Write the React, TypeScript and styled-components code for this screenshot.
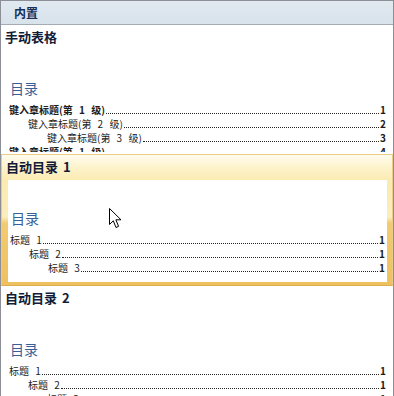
import React from 'react';
import styled, {createGlobalStyle} from "styled-components";

const GlobalStyle = createGlobalStyle`
    html, body {
        margin: 0;
        padding: 0;
        background: #ffffff;
    }
    body {
        font-family: "Noto Sans CJK SC", "Noto Sans", sans-serif;
    }
`

type Entry = { text: string; page: string; level: number; bold?: boolean };

const manualEntries: Entry[] = [
    {text: '键入章标题(第 1 级)', page: '1', level: 1, bold: true},
    {text: '键入章标题(第 2 级)', page: '2', level: 2},
    {text: '键入章标题(第 3 级)', page: '3', level: 3},
    {text: '键入章标题(第 1 级)', page: '4', level: 1, bold: true},
];

const autoEntries: Entry[] = [
    {text: '标题 1', page: '1', level: 1},
    {text: '标题 2', page: '1', level: 2},
    {text: '标题 3', page: '1', level: 3},
];

const Toc = ({entries}: { entries: Entry[] }) => (
    <Preview>
        <TocHeading>目录</TocHeading>
        <Entries>
            {entries.map((e, i) => (
                <EntryRow key={i} $level={e.level} $bold={e.bold}>
                    <EntryText>{e.text}</EntryText>
                    <Leader/>
                    <PageNum>{e.page}</PageNum>
                </EntryRow>
            ))}
        </Entries>
    </Preview>
);

const Cursor = () => (
    <CursorWrap>
        <svg width="13" height="21" viewBox="0 0 13 21">
            <path d="M0.5 0.5 L0.5 16.5 L4.3 12.8 L7 19.5 L9.6 18.4 L6.9 11.8 L12 11.8 Z"
                  fill="#ffffff" stroke="#000000" strokeWidth="1" strokeLinejoin="miter"/>
        </svg>
    </CursorWrap>
);

export default function App() {
    return (
        <>
            <GlobalStyle/>
            <Panel>
                <Header>内置</Header>
                <List>
                    <Item>
                        <ItemTitle>手动表格</ItemTitle>
                        <Toc entries={manualEntries}/>
                    </Item>
                    <Item $selected>
                        <ItemTitle>自动目录 1</ItemTitle>
                        <Toc entries={autoEntries}/>
                        <Cursor/>
                    </Item>
                    <Item>
                        <ItemTitle>自动目录 2</ItemTitle>
                        <Toc entries={autoEntries}/>
                    </Item>
                </List>
            </Panel>
        </>
    );
}

const Panel = styled.div`
    width: 394px;
    height: 396px;
    box-sizing: border-box;
    border: 1px solid #8c9096;
    border-bottom: none;
    display: flex;
    flex-direction: column;
    overflow: hidden;
    background: #ffffff;
`

const Header = styled.div`
    height: 24px;
    flex-shrink: 0;
    box-sizing: border-box;
    padding-left: 13px;
    line-height: 23px;
    font-size: 12px;
    font-weight: 700;
    color: #16305a;
    background: linear-gradient(to bottom, #e1e9f0, #d8e2eb);
    border-bottom: 1px solid #a4abb2;
`

const List = styled.div`
    flex: 1;
    overflow: hidden;
    display: flex;
    flex-direction: column;
`

const Item = styled.div<{ $selected?: boolean }>`
    position: relative;
    flex-shrink: 0;
    padding: 0 0 ${p => p.$selected ? '3px' : '2px'};
    border: ${p => p.$selected ? '1px solid #e8cd82' : 'none'};
    border-bottom-color: ${p => p.$selected ? '#dcae4e' : 'transparent'};
    background: ${p => p.$selected
            ? 'linear-gradient(to bottom, #fffcef 0px, #fdf3cc 12px, #fbeab0 26px, #fbedbd 62px, #f2cb72 68px, #efc060 100%)'
            : 'transparent'};
`

const ItemTitle = styled.div`
    height: 25px;
    line-height: 24px;
    padding-left: 4px;
    font-size: 13px;
    font-weight: 700;
    color: #121c38;
    word-spacing: 2px;
`

const Preview = styled.div`
    height: 102px;
    margin: 0 5px 0 6px;
    padding: 29px 2px 0 2px;
    box-sizing: border-box;
    background: #ffffff;
    overflow: hidden;
`

const TocHeading = styled.div`
    height: 18px;
    line-height: 18px;
    padding-left: 1px;
    font-size: 14px;
    color: #375f98;
`

const Entries = styled.div`
    margin-top: 6px;
    display: flex;
    flex-direction: column;
`

const EntryRow = styled.div<{ $level: number; $bold?: boolean }>`
    display: flex;
    align-items: flex-end;
    height: 14px;
    line-height: 14px;
    padding-left: ${p => (p.$level - 1) * 19}px;
    font-size: 10px;
    font-weight: ${p => p.$bold ? 700 : 400};
    color: #1c1c1c;
`

const EntryText = styled.span`
    white-space: pre;
    word-spacing: 4px;
`

const Leader = styled.span`
    flex: 1;
    height: 0;
    margin: 0 0 3px 1px;
    border-bottom: 1px dotted #222222;
`

const PageNum = styled.span`
    font-weight: 700;
    padding-left: 1px;
`

const CursorWrap = styled.div`
    position: absolute;
    left: 107px;
    top: 53px;
    width: 13px;
    height: 21px;
    pointer-events: none;
`
